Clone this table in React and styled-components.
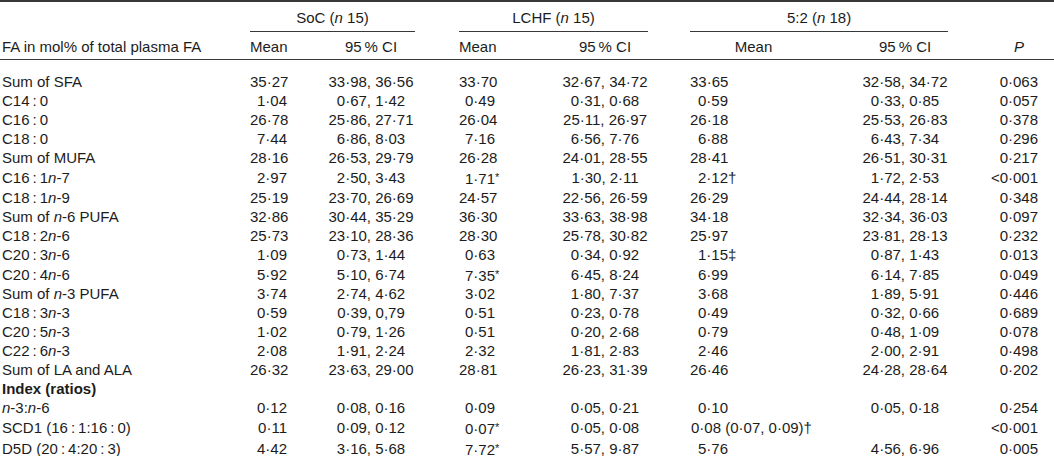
import React from "react";
import styled, { createGlobalStyle } from "styled-components";

const GlobalStyle = createGlobalStyle`
  html, body {
    margin: 0;
    padding: 0;
    background: #fff;
  }
  body {
    font-family: "Liberation Sans", Arial, Helvetica, sans-serif;
    color: #1c1c1c;
  }
`;

const Table = styled.table`
  width: 1054px;
  table-layout: fixed;
  border-collapse: separate;
  border-spacing: 0;
  font-size: 15px;
  border-top: 2px solid #383838;
  border-bottom: 2px solid #383838;
`;

const Col = styled.col`
  width: ${(p) => p.$w}px;
`;

const GroupTh = styled.th`
  font-weight: normal;
  text-align: center;
  line-height: 19px;
  padding: 6px 0 4px;
  border-bottom: ${(p) => (p.$rule ? "1px solid #383838" : "none")};
`;

const HeadTh = styled.th`
  font-weight: normal;
  line-height: 19px;
  padding: 5px ${(p) => p.$pr || 0}px 3px ${(p) => p.$pl || 0}px;
  text-align: ${(p) => p.$align || "left"};
  border-bottom: 1px solid #383838;
  white-space: nowrap;
`;

const Row = styled.tr`
  &:first-child td {
    padding-top: 13px;
  }
`;

const Cell = styled.td`
  line-height: 18.95px;
  padding: 0 ${(p) => p.$pr || 0}px 0 ${(p) => p.$pl || 0}px;
  text-align: ${(p) => p.$align || "left"};
  white-space: nowrap;
  font-weight: ${(p) => (p.$bold ? "bold" : "normal")};
`;

const I = styled.i`
  font-style: italic;
`;

const Mark = styled.span`
  display: inline-block;
  width: 0;
  overflow: visible;
  font-size: ${(p) => (p.$star ? "11px" : "15px")};
  vertical-align: ${(p) => (p.$star ? "3px" : "baseline")};
`;

const cols = [250, 45, 120, 44, 45, 144, 42, 95, 163, 106];

// column alignment for the data cells
const socMean = { $align: "right", $pr: 8 };
const socCi = { $align: "center", $pl: 32 };
const lchfMean = { $align: "right", $pr: 9 };
const lchfCi = { $align: "center", $pl: 58 };
const fsMean = { $align: "right", $pr: 57 };
const fsCi = { $align: "center", $pl: 77 };
const pCol = { $align: "right", $pr: 16 };

const T = "\u2009";
const fa = (a, b, n) => (
  <>
    C{a}
    {T}:{T}
    {b}
    {n && (
      <>
        <I>n</I>-{n}
      </>
    )}
  </>
);

const rows = [
  ["Sum of SFA", "35·27", "33·98, 36·56", "33·70", "32·67, 34·72", "33·65", "32·58, 34·72", "0·063"],
  [fa(14, 0), "1·04", "0·67, 1·42", "0·49", "0·31, 0·68", "0·59", "0·33, 0·85", "0·057"],
  [fa(16, 0), "26·78", "25·86, 27·71", "26·04", "25·11, 26·97", "26·18", "25·53, 26·83", "0·378"],
  [fa(18, 0), "7·44", "6·86, 8·03", "7·16", "6·56, 7·76", "6·88", "6·43, 7·34", "0·296"],
  ["Sum of MUFA", "28·16", "26·53, 29·79", "26·28", "24·01, 28·55", "28·41", "26·51, 30·31", "0·217"],
  [fa(16, 1, 7), "2·97", "2·50, 3·43", "1·71*", "1·30, 2·11", "2·12†", "1·72, 2·53", "<0·001"],
  [fa(18, 1, 9), "25·19", "23·70, 26·69", "24·57", "22·56, 26·59", "26·29", "24·44, 28·14", "0·348"],
  [<>Sum of <I>n</I>-6 PUFA</>, "32·86", "30·44, 35·29", "36·30", "33·63, 38·98", "34·18", "32·34, 36·03", "0·097"],
  [fa(18, 2, 6), "25·73", "23·10, 28·36", "28·30", "25·78, 30·82", "25·97", "23·81, 28·13", "0·232"],
  [fa(20, 3, 6), "1·09", "0·73, 1·44", "0·63", "0·34, 0·92", "1·15‡", "0·87, 1·43", "0·013"],
  [fa(20, 4, 6), "5·92", "5·10, 6·74", "7·35*", "6·45, 8·24", "6·99", "6·14, 7·85", "0·049"],
  [<>Sum of <I>n</I>-3 PUFA</>, "3·74", "2·74, 4·62", "3·02", "1·80, 7·37", "3·68", "1·89, 5·91", "0·446"],
  [fa(18, 3, 3), "0·59", "0·39, 0,79", "0·51", "0·23, 0·78", "0·49", "0·32, 0·66", "0·689"],
  [fa(20, 5, 3), "1·02", "0·79, 1·26", "0·51", "0·20, 2·68", "0·79", "0·48, 1·09", "0·078"],
  [fa(22, 6, 3), "2·08", "1·91, 2·24", "2·32", "1·81, 2·83", "2·46", "2·00, 2·91", "0·498"],
  ["Sum of LA and ALA", "26·32", "23·63, 29·00", "28·81", "26·23, 31·39", "26·46", "24·28, 28·64", "0·202"],
  { heading: "Index (ratios)" },
  [<><I>n</I>-3:<I>n</I>-6</>, "0·12", "0·08, 0·16", "0·09", "0·05, 0·21", "0·10", "0·05, 0·18", "0·254"],
  [<>SCD1 (16{T}:{T}1:16{T}:{T}0)</>, "0·11", "0·09, 0·12", "0·07*", "0·05, 0·08", { span: "0·08 (0·07, 0·09)†" }, "<0·001"],
  [<>D5D (20{T}:{T}4:20{T}:{T}3)</>, "4·42", "3·16, 5·68", "7·72*", "5·57, 9·87", "5·76", "4·56, 6·96", "0·005"],
];

const Value = ({ v }) => {
  const m = v.match(/^(.*?)([*†‡])$/);
  if (!m) return v;
  return (
    <>
      {m[1]}
      <Mark $star={m[2] === "*"}>{m[2]}</Mark>
    </>
  );
};

const DataRow = ({ r }) => {
  const [label, a, b, c, d, e, f, p] = r;
  return (
    <Row>
      <Cell $pl={2}>{label}</Cell>
      <Cell {...socMean}><Value v={a} /></Cell>
      <Cell {...socCi}>{b}</Cell>
      <Cell />
      <Cell {...lchfMean}><Value v={c} /></Cell>
      <Cell {...lchfCi}>{d}</Cell>
      <Cell />
      {e && e.span ? (
        <Cell colSpan={2} $pl={-3}>{e.span}</Cell>
      ) : (
        <>
          <Cell {...fsMean}><Value v={e} /></Cell>
          <Cell {...fsCi}>{f}</Cell>
        </>
      )}
      <Cell {...pCol}>{e && e.span ? f : p}</Cell>
    </Row>
  );
};

export default function App() {
  return (
    <>
      <GlobalStyle />
      <Table>
        <colgroup>
          {cols.map((w, i) => (
            <Col key={i} $w={w} />
          ))}
        </colgroup>
        <thead>
          <tr>
            <GroupTh />
            <GroupTh colSpan={2} $rule>
              SoC (<I>n</I> 15)
            </GroupTh>
            <GroupTh />
            <GroupTh colSpan={2} $rule>
              LCHF (<I>n</I> 15)
            </GroupTh>
            <GroupTh />
            <GroupTh colSpan={2} $rule>
              5:2 (<I>n</I> 18)
            </GroupTh>
            <GroupTh />
          </tr>
          <tr>
            <HeadTh $pl={2}>FA in mol% of total plasma FA</HeadTh>
            <HeadTh {...socMean}>Mean</HeadTh>
            <HeadTh {...socCi}>95{T}% CI</HeadTh>
            <HeadTh />
            <HeadTh {...lchfMean}>Mean</HeadTh>
            <HeadTh {...lchfCi}>95{T}% CI</HeadTh>
            <HeadTh />
            <HeadTh $align="center" $pl={32}>Mean</HeadTh>
            <HeadTh {...fsCi}>95{T}% CI</HeadTh>
            <HeadTh $align="right" $pr={30}>
              <I>P</I>
            </HeadTh>
          </tr>
        </thead>
        <tbody>
          {rows.map((r, i) =>
            r.heading ? (
              <Row key={i}>
                <Cell $pl={2} $bold colSpan={10}>
                  {r.heading}
                </Cell>
              </Row>
            ) : (
              <DataRow key={i} r={r} />
            )
          )}
        </tbody>
      </Table>
    </>
  );
}
